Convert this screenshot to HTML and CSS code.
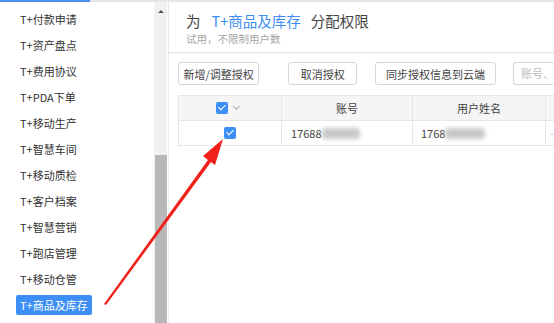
FILE: index.html
```html
<!DOCTYPE html>
<html>
<head>
<meta charset="utf-8">
<link rel="stylesheet" href="styles.css">
</head>
<body>
<div class="topline"><div class="topline-active"></div></div>
<div class="app">
  <aside class="sidebar">
    <div class="item">T+付款申请</div>
    <div class="item">T+资产盘点</div>
    <div class="item">T+费用协议</div>
    <div class="item">T+PDA下单</div>
    <div class="item">T+移动生产</div>
    <div class="item">T+智慧车间</div>
    <div class="item">T+移动质检</div>
    <div class="item">T+客户档案</div>
    <div class="item">T+智慧营销</div>
    <div class="item">T+跑店管理</div>
    <div class="item">T+移动仓管</div>
    <div class="item"><span class="selected">T+商品及库存</span></div>
  </aside>
  <div class="scrollbar">
    <div class="arrow-up"></div>
    <div class="thumb"></div>
  </div>
  <main class="main">
    <header class="head">
      <div class="title">为<span class="app-name">T+商品及库存</span>分配权限</div>
      <div class="sub">试用，不限制用户数</div>
    </header>
    <div class="content">
      <div class="toolbar">
        <button class="btn btn-1">新增/调整授权</button>
        <button class="btn btn-2">取消授权</button>
        <button class="btn btn-3">同步授权信息到云端</button>
        <div class="search">账号、</div>
      </div>
      <div class="table">
        <div class="row thead">
          <div class="cell c1"><span class="cb"></span><span class="chev"></span></div>
          <div class="cell c2 center">账号</div>
          <div class="cell c3 center">用户姓名</div>
          <div class="cell c4"></div>
        </div>
        <div class="row">
          <div class="cell c1"><span class="cb cb-row"></span></div>
          <div class="cell c2">17688<span class="blur b1"></span></div>
          <div class="cell c3">1768<span class="blur b2"></span></div>
          <div class="cell c4 dash">-</div>
        </div>
      </div>
    </div>
  </main>
</div>
<svg class="annot" width="554" height="323" viewBox="0 0 554 323">
  <path d="M104 304 L208 160 L203 156 L223 139 L215 165 L211 162 L106 305 Z" fill="#f0201a"/>
</svg>
</body>
</html>
```
FILE: styles.css
```css
html, body {
  margin: 0;
  padding: 0;
  background: #fff;
  width: 554px;
  height: 323px;
  overflow: hidden;
  font-family: "Noto Sans CJK SC", "Liberation Sans", sans-serif;
  color: #333;
}
.topline {
  height: 2px;
  background: #e6e6e6;
  display: flex;
}
.topline-active {
  width: 90px;
  background: #4a8ff0;
}
.app {
  display: flex;
  height: 321px;
}
.sidebar {
  width: 154px;
  padding-top: 4px;
  box-sizing: border-box;
}
.item {
  height: 26px;
  line-height: 26px;
  font-size: 11px;
  padding-left: 20px;
  color: #333;
  white-space: nowrap;
}
.selected {
  display: inline-block;
  margin-left: -4px;
  padding: 0 4px 0 4px;
  height: 20px;
  line-height: 20px;
  background: #3d8ef5;
  color: #fff;
  border-radius: 2px;
}
.scrollbar {
  width: 13px;
  background: #f1f1f1;
  display: flex;
  flex-direction: column;
  align-items: center;
}
.arrow-up {
  margin-top: 8px;
  width: 0;
  height: 0;
  border-left: 3px solid transparent;
  border-right: 3px solid transparent;
  border-bottom: 3px solid #555;
}
.thumb {
  margin-top: 142px;
  width: 12px;
  flex: 1;
  background: #b8b8b8;
}
.main {
  flex: 1;
  margin-left: 1px;
  border-left: 1px solid #ececec;
  display: flex;
  flex-direction: column;
  min-width: 0;
}
.head {
  height: 51px;
  box-sizing: border-box;
  padding: 9px 0 0 17px;
  border-bottom: 1px solid #e4e4e4;
  box-shadow: 0 1px 2px rgba(0,0,0,0.05);
}
.title {
  font-size: 14.5px;
  line-height: 20px;
  color: #444;
  white-space: nowrap;
}
.app-name {
  color: #3d8ef5;
  margin: 0 10px 0 11px;
}
.sub {
  font-size: 10.5px;
  line-height: 14px;
  color: #a6a6a6;
  margin-top: 1px;
}
.content {
  padding: 9px 0 0 9px;
}
.toolbar {
  display: flex;
  align-items: center;
  white-space: nowrap;
}
.btn {
  height: 23px;
  box-sizing: border-box;
  border: 1px solid #d6d6d6;
  border-radius: 3px;
  background: #fff;
  font-family: inherit;
  font-size: 11px;
  color: #444;
  padding: 0;
}
.btn-1 { width: 82px; }
.btn-2 { width: 69px; margin-left: 29px; }
.btn-3 { width: 122px; margin-left: 18px; }
.search {
  margin-left: 17px;
  height: 23px;
  line-height: 21px;
  box-sizing: border-box;
  border: 1px solid #d6d6d6;
  border-radius: 3px;
  border-right: none;
  padding-left: 7px;
  font-size: 11px;
  color: #bbb;
  flex: 1;
}
.table {
  margin-top: 10px;
  border-top: 1px solid #e6e6e6;
  border-left: 1px solid #e6e6e6;
  width: 400px;
}
.row {
  display: flex;
  height: 24px;
  border-bottom: 1px solid #e6e6e6;
}
.thead {
  background: #f5f5f5;
}
.cell {
  box-sizing: border-box;
  border-right: 1px solid #e6e6e6;
  display: flex;
  align-items: center;
  font-size: 11px;
  color: #444;
  white-space: nowrap;
}
.center { justify-content: center; }
.c1 { width: 103px; justify-content: center; }
.c2 { width: 131px; padding-left: 9px; }
.c3 { width: 133px; padding-left: 8px; }
.c4 { flex: 1; border-right: none; padding-left: 4px; }
.c2.center, .c3.center { padding-left: 0; }
.dash { color: #bbb; }
.cb {
  display: inline-block;
  width: 12px;
  height: 12px;
  background: #3d8ef5;
  border-radius: 2px;
  position: relative;
}
.cb::after {
  content: "";
  position: absolute;
  left: 4px;
  top: 1px;
  width: 3px;
  height: 6px;
  border: solid #fff;
  border-width: 0 1.5px 1.5px 0;
  transform: rotate(45deg);
}
.chev {
  display: inline-block;
  width: 4px;
  height: 4px;
  margin-left: 6px;
  margin-top: -3px;
  border: solid #aaa;
  border-width: 0 1px 1px 0;
  transform: rotate(45deg);
}
.c1 .cb:first-child:not(.cb-row) { margin-left: -6px; }
.cb-row { margin-left: 0; }
.blur {
  display: inline-block;
  height: 11px;
  background: #c8c8c8;
  border-radius: 4px;
  filter: blur(2px);
}
.b1 { width: 38px; }
.b2 { width: 40px; }
.annot {
  position: absolute;
  left: 0;
  top: 0;
  pointer-events: none;
}
```
